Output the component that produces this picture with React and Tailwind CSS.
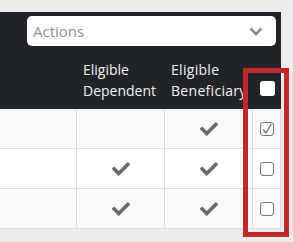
import React from 'react';
import { FaCheck } from 'react-icons/fa';

const rows = [
  { dependent: false, beneficiary: true, selected: true, bg: 'bg-[#f9f9f9]' },
  { dependent: true, beneficiary: true, selected: false, bg: 'bg-white' },
  { dependent: true, beneficiary: true, selected: false, bg: 'bg-[#f9f9f9]' },
];

const Box = ({ checked }) => (
  <div className="w-[14px] h-[14px] rounded-[3px] border border-[#767676] bg-white flex items-center justify-center">
    {checked && (
      <svg width="12" height="12" viewBox="0 0 12 12">
        <path d="M2.5 7 L5 10 L10 1.5" fill="none" stroke="#4a74b4" strokeWidth="1.4" strokeLinecap="round" strokeLinejoin="round" />
      </svg>
    )}
  </div>
);

const Tick = () => <FaCheck className="text-[#6a6a6a] w-[18px] h-[18px]" />;

export default function App() {
  return (
    <div className="relative min-h-screen bg-[#ebebeb] pt-3 font-['Open_Sans',sans-serif]">
      <div className="w-[281px]">
        {/* Toolbar + header */}
        <div className="bg-[#202328]">
          <div className="pt-1 pl-[27px]">
            <div className="w-[249px] h-[30px] rounded-[5px] bg-white flex items-center justify-between pl-[6px] pr-[13px]">
              <span className="text-[15px] text-[#8a8f99]">Actions</span>
              <svg width="14" height="9" viewBox="0 0 14 9">
                <path d="M1.5 1.5 L7 7 L12.5 1.5" fill="none" stroke="#8c8c8c" strokeWidth="2.6" />
              </svg>
            </div>
          </div>
          <div className="grid grid-cols-[76px_88px_88px_29px] h-[63px] text-[14px] leading-[21px] text-[#f2f2f2] font-medium">
            <div />
            <div className="pl-[7px] pt-[13px]">Eligible<br />Dependent</div>
            <div className="pl-[7px] pt-[13px] whitespace-nowrap tracking-[0.3px]">Eligible<br />Beneficiary</div>
            <div className="flex items-end justify-center pb-[13px]">
              <div className="w-[15px] h-[15px] rounded-[3px] bg-white ml-[1px]" />
            </div>
          </div>
        </div>

        {/* Body rows */}
        {rows.map((r, i) => (
          <div key={i} className={`grid grid-cols-[76px_88px_88px_29px] h-[40px] border-b border-[#dddddd] ${r.bg}`}>
            <div />
            <div className="border-l border-[#dddddd] flex items-center justify-center">
              {r.dependent && <Tick />}
            </div>
            <div className="border-l border-[#dddddd] flex items-center justify-center">
              {r.beneficiary && <Tick />}
            </div>
            <div className="border-l border-r border-[#dddddd] flex items-center justify-center">
              <Box checked={r.selected} />
            </div>
          </div>
        ))}
      </div>

      {/* Highlight overlay */}
      <div className="absolute left-[243px] top-[68px] w-[46px] h-[169px] border-[5px] border-[#c0282d]" />
    </div>
  );
}
